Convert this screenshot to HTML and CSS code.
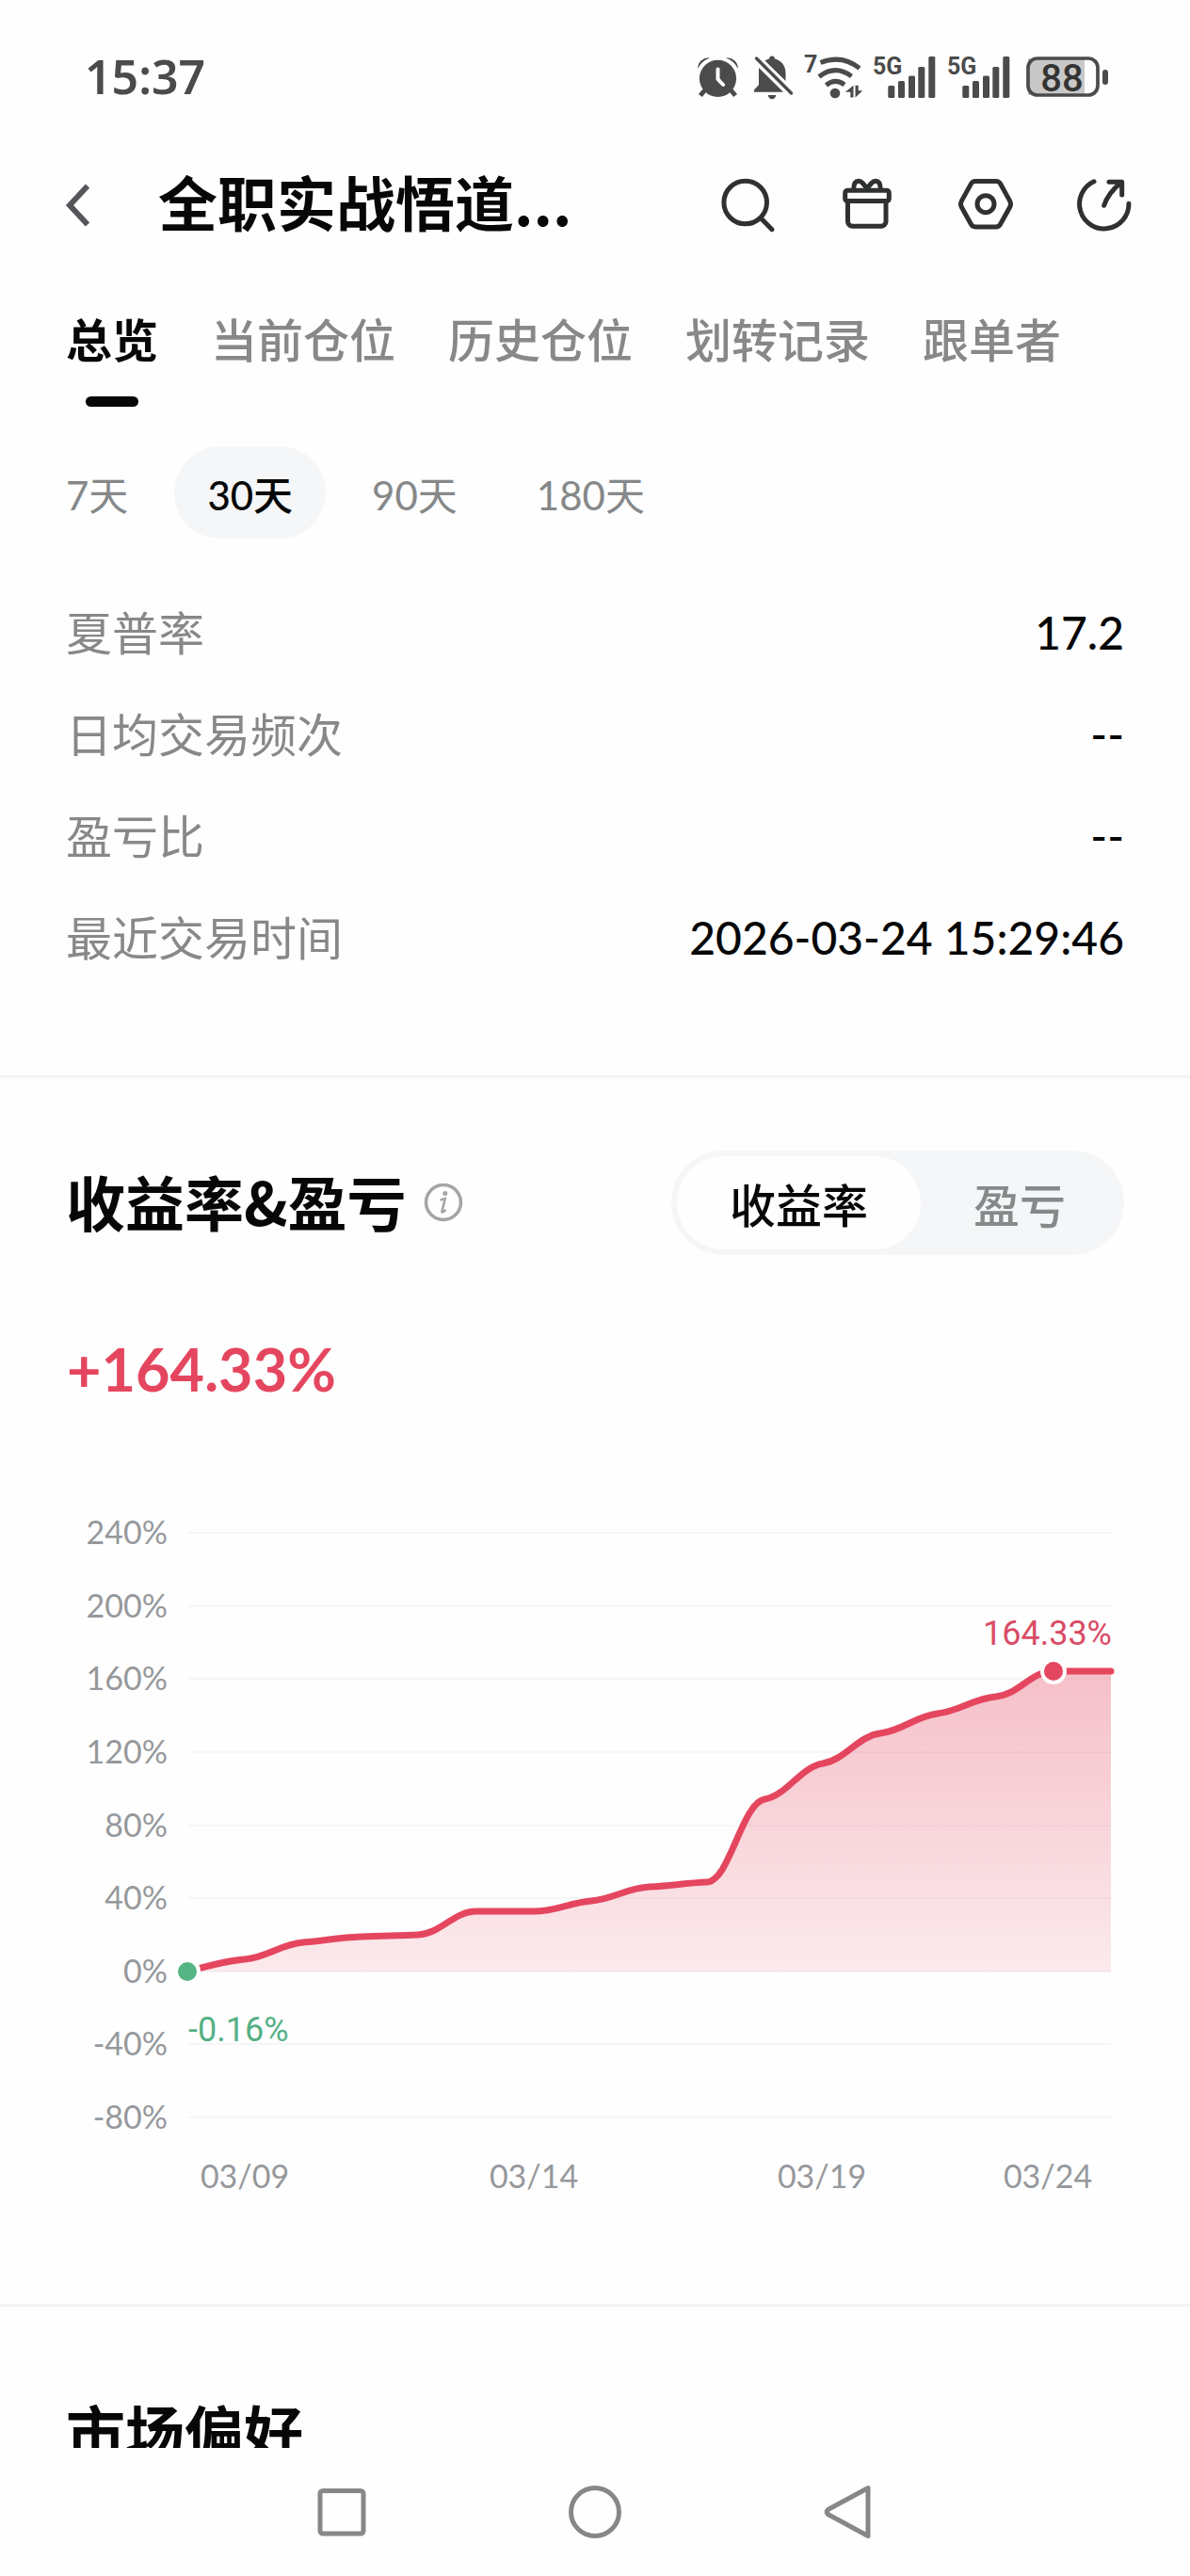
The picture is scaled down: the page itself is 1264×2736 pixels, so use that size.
FILE: index.html
```html
<!DOCTYPE html>
<html lang="zh-CN">
<head>
<meta charset="utf-8">
<meta name="viewport" content="width=device-width, initial-scale=1">
<title>全职实战悟道</title>
<link rel="stylesheet" href="styles.css">
</head>
<body>
<div class="app">
  <div class="status">
    <time class="clock">15:37</time>
    <svg class="status-icons" viewBox="20 15 440 50" aria-hidden="true">
      <g fill="#4b4b4b">
        <circle cx="42.5" cy="42.3" r="19.6"/>
        <path d="M21.2 32a11.4 11.4 0 0 1 12.6-11.6q-9 3.400-12.600 11.600zM63.800 32a11.400 11.400 0 0 0-12.600-11.600q9 3.400 12.600 11.600z"/>
        <path d="M28.500 55l-4.600 5.500M56.500 55l4.600 5.500" stroke="#4b4b4b" stroke-width="5" fill="none"/>
        <path d="M42.500 32.500v10.500l5.600 6" stroke="#fefefe" stroke-width="4" stroke-linecap="round" fill="none"/>
        <path d="M86 31l26 25.800H81v-2.300l5-5.500zM92.500 23.500q2.300-1.500 4.700-2.200a2.800 2.800 0 0 1 5.600 0c7.400 1.900 11.700 8 11.700 15.200V45z"/>
        <path d="M83.500 21l37 37" stroke="#4b4b4b" stroke-width="3.400" stroke-linecap="round"/>
        <path d="M95.800 60h8.400a4.200 4.200 0 0 1-8.400 0z"/>
        <circle cx="167" cy="58" r="5.300"/>
        <path d="M186.500 49.800v12.800h-3.200v-5.800h-5.500zM188.500 62.600V49.800h3.200v5.400h4.600z"/>
        <g fill="none" stroke="#4b4b4b" stroke-width="5">
          <path d="M151.500 25.500Q174 16.500 193 31.500"/>
          <path d="M150 40.500Q167 27 184.500 40"/>
          <path d="M157.500 49.500Q167 41.500 177 49"/>
        </g>
        <g id="bars">
          <rect x="223.300" y="50" width="7" height="13" rx="1.500"/>
          <rect x="234" y="45" width="7" height="18" rx="1.500"/>
          <rect x="245" y="39.500" width="7" height="23.500" rx="1.500"/>
          <rect x="255.300" y="30" width="7" height="33" rx="1.500"/>
          <rect x="266.300" y="19" width="7" height="44" rx="1.500"/>
        </g>
        <use href="#bars" x="79"/>
        <rect x="451" y="33" width="6" height="16" rx="3"/>
      </g>
      <rect x="372" y="21" width="60" height="39" fill="#c8c8c8"/>
      <rect x="372" y="21" width="74" height="39" rx="10" fill="none" stroke="#4b4b4b" stroke-width="3.700"/>
      <text class="net" x="134" y="36">7</text>
      <text class="net" x="207" y="38">5G</text>
      <text class="net" x="286" y="38">5G</text>
      <text class="battery" x="408" y="56" text-anchor="middle">88</text>
    </svg>
  </div>

  <header class="header">
    <button class="icon-btn back" aria-label="返回"><svg viewBox="0 0 32 64"><path d="M25 12.500L6 33l19 20.500" stroke="#55565a" stroke-width="6" fill="none"/></svg></button>
    <h1 class="title">全职实战悟道...</h1>
    <div class="actions">
      <button class="icon-btn" aria-label="搜索"><svg viewBox="0 0 64 64"><circle cx="29.700" cy="30" r="22.800"/><path d="M46.700 47.300L58 58.700"/></svg></button>
      <button class="icon-btn" aria-label="礼物"><svg viewBox="0 0 64 64"><rect x="9.700" y="17.300" width="46.600" height="11.300" rx="2.500"/><path d="M12.500 29v21.300a5 5 0 0 0 5 5h30.500a5 5 0 0 0 5-5V29"/><path d="M18.700 16.500c0-5.500 1.500-9.300 5.300-9.300 3.300 0 5.600 3.400 9 8.300 3.400-4.900 5.700-8.300 9-8.300 3.800 0 5.300 3.800 5.300 9.300"/></svg></button>
      <button class="icon-btn" aria-label="设置"><svg viewBox="0 0 64 64"><path d="M22 7.500h22q3 0 4.500 2.600l10 18q2 3.600 0 7.200l-10 18q-1.500 2.600-4.500 2.600H22q-3 0-4.500-2.600l-10-18q-2-3.600 0-7.200l10-18Q19 7.500 22 7.500z"/><circle cx="33" cy="31.700" r="9"/></svg></button>
      <button class="icon-btn" aria-label="分享"><svg viewBox="0 0 64 64"><path d="M22 7.800A26.200 26.200 0 1 0 59 31.300"/><path d="M32.700 33.300Q37 20 51 8.800M38 8.200h13.700v13.800"/></svg></button>
    </div>
  </header>

  <nav class="tabs">
    <a class="tab active" href="#overview">总览</a>
    <a class="tab" href="#current">当前仓位</a>
    <a class="tab" href="#history">历史仓位</a>
    <a class="tab" href="#transfer">划转记录</a>
    <a class="tab" href="#followers">跟单者</a>
  </nav>

  <main class="content" id="overview">
    <section class="stats">
      <div class="periods">
        <button class="period">7天</button>
        <button class="period active">30天</button>
        <button class="period">90天</button>
        <button class="period">180天</button>
      </div>
      <dl class="list">
        <div class="row"><dt>夏普率</dt><dd>17.2</dd></div>
        <div class="row"><dt>日均交易频次</dt><dd>--</dd></div>
        <div class="row"><dt>盈亏比</dt><dd>--</dd></div>
        <div class="row"><dt>最近交易时间</dt><dd>2026-03-24 15:29:46</dd></div>
      </dl>
    </section>

    <section class="returns">
      <div class="returns-head">
        <h2 class="heading">收益率&amp;盈亏</h2>
        <button class="icon-btn info" aria-label="说明"><svg viewBox="0 0 42 42"><circle cx="21" cy="20" r="18.500" fill="none" stroke="#a3a5a6" stroke-width="3.500"/><circle cx="22.800" cy="10.600" r="2.500" fill="#a3a5a6"/><path d="M17.500 17.500l5.300-1.200-3.300 13.200q-.6 2.300 4-1.500" fill="none" stroke="#a3a5a6" stroke-width="2.600"/></svg></button>
        <div class="switch">
          <button class="option active">收益率</button>
          <button class="option">盈亏</button>
        </div>
      </div>
      <p class="total">+164.33%</p>
      <svg class="chart" viewBox="0 0 1264 760" role="img" aria-label="收益率走势">
        <defs>
          <linearGradient id="fade" x1="0" y1="0" x2="0" y2="1">
            <stop offset="0" stop-color="#e5465f" stop-opacity=".34"/>
            <stop offset="1" stop-color="#e5465f" stop-opacity=".11"/>
          </linearGradient>
        </defs>
        <path class="grid" d="M200 28h981M200 106h981M200 183h981M200 261h981M200 339h981M200 416h981M200 494h981M200 571h981M200 649h981"/>
        <g class="axis" text-anchor="end">
          <text x="178" y="40">240%</text>
          <text x="178" y="118">200%</text>
          <text x="178" y="195">160%</text>
          <text x="178" y="273">120%</text>
          <text x="178" y="351">80%</text>
          <text x="178" y="428">40%</text>
          <text x="178" y="506">0%</text>
          <text x="178" y="583">-40%</text>
          <text x="178" y="661">-80%</text>
        </g>
        <g class="axis" text-anchor="middle">
          <text x="260" y="724">03/09</text>
          <text x="567" y="724">03/14</text>
          <text x="873" y="724">03/19</text>
          <text x="1113" y="724">03/24</text>
        </g>
        <path fill="url(#fade)" d="M199 494C223 488 236 483 260 481S298 465 322 463S359 458 383 457S420 456 444 455S482 430 506 430S543 430 567 430S604 421 628 419S666 405 690 404S727 400 751 399S788 315 812 311S850 277 874 273S911 244 935 241S972 223 996 220S1034 204 1058 202S1095 175 1119 175L1180 175V494z"/>
        <path class="line" d="M199 494C223 488 236 483 260 481S298 465 322 463S359 458 383 457S420 456 444 455S482 430 506 430S543 430 567 430S604 421 628 419S666 405 690 404S727 400 751 399S788 315 812 311S850 277 874 273S911 244 935 241S972 223 996 220S1034 204 1058 202S1095 175 1119 175L1180 175"/>
        <circle class="dot" cx="199" cy="494" r="12" fill="#55b585"/>
        <circle class="dot" cx="1119" cy="175" r="12" fill="#e5465f"/>
        <text class="callout high" x="1181" y="147" text-anchor="end">164.33%</text>
        <text class="callout low" x="200" y="568">-0.16%</text>
      </svg>
    </section>

    <section class="market">
      <h2 class="heading">市场偏好</h2>
    </section>
  </main>

  <div class="navbar">
    <button class="icon-btn" aria-label="最近任务"><svg viewBox="0 0 64 64"><rect x="9" y="9.500" width="46" height="45.500" rx="3"/></svg></button>
    <button class="icon-btn" aria-label="主页"><svg viewBox="0 0 64 64"><circle cx="32" cy="32" r="25.500"/></svg></button>
    <button class="icon-btn" aria-label="返回上一页"><svg viewBox="0 0 64 64"><path d="M53 6.500v51L10.500 34.500q-2.500-2.500 0-5z"/></svg></button>
  </div>
</div>
</body>
</html>
```
FILE: styles.css
```css
* { box-sizing: border-box; }

body {
  margin: 0;
  background: #fefefe;
  color: #060707;
  font-family: Lato, "Noto Sans CJK SC", sans-serif;
}

h1, h2, p, dl, dd { margin: 0; }

button {
  padding: 0;
  border: 0;
  background: none;
  color: inherit;
  font: inherit;
}

svg { display: block; }

.app {
  display: flex;
  flex-direction: column;
  height: 100vh;
}

.status {
  flex: none;
  display: flex;
  justify-content: space-between;
  align-items: center;
  height: 162px;
  padding: 0 84px 0 90px;
}

.clock {
  color: #4b4b4b;
  font: 600 50px/64px "Noto Sans", sans-serif;
}

.status-icons {
  width: 440px;
  height: 50px;
}

.net {
  fill: #4b4b4b;
  font: 700 25px Roboto, sans-serif;
}

.battery {
  fill: #333;
  font: 500 40px Roboto, sans-serif;
}

.header {
  flex: none;
  display: flex;
  align-items: center;
  height: 110px;
  padding: 0 60px 0 68px;
}

.icon-btn svg {
  width: 64px;
  height: 64px;
}

.back svg { width: 32px; }

.title {
  margin-left: 68px;
  padding-bottom: 8px;
  font: 700 63px/80px "Noto Sans CJK SC", sans-serif;
}

.actions {
  display: flex;
  gap: 62px;
  margin-left: auto;
}

.actions svg {
  fill: none;
  stroke: #2e3031;
  stroke-width: 5;
  stroke-linecap: round;
  stroke-linejoin: round;
}

.tabs {
  flex: none;
  display: flex;
  gap: 56px;
  padding: 57px 70px 0;
}

.tab {
  color: #868889;
  font-size: 49px;
  font-weight: 500;
  line-height: 64px;
  text-decoration: none;
}

.tab::after {
  content: "";
  display: block;
  width: 56px;
  height: 11px;
  margin: 28px auto 0;
  border-radius: 6px;
}

.tab.active {
  color: #060707;
  font-weight: 700;
}

.tab.active::after { background: #060707; }

.content {
  flex: 1;
  min-height: 0;
  overflow: hidden;
}

.stats {
  padding: 42px 0 114px;
  border-bottom: 3px solid #f3f4f4;
}

.periods {
  display: flex;
  gap: 14px;
  padding: 0 35px;
}

.period {
  height: 98px;
  padding: 0 35px;
  border-radius: 49px;
  color: #868889;
  font-size: 42px;
}

.period.active {
  background: #f4f6f8;
  color: #060707;
  font-weight: 500;
}

.list {
  display: flex;
  flex-direction: column;
  gap: 44px;
  margin-top: 68px;
  padding: 0 70px;
}

.row {
  display: flex;
  justify-content: space-between;
  font-size: 49px;
  line-height: 64px;
}

.row dt { color: #868889; }

.row dd {
  font-size: 48px;
  font-weight: 500;
}

.returns {
  padding: 77px 0 87px;
  border-bottom: 3px solid #f3f4f4;
}

.returns-head {
  display: flex;
  align-items: center;
  padding: 0 70px;
}

.heading {
  padding-bottom: 6px;
  font: 700 63px/64px "Noto Sans CJK SC", sans-serif;
}

.info { margin-left: 18px; }

.info svg {
  width: 42px;
  height: 42px;
}

.switch {
  display: flex;
  margin-left: auto;
  padding: 6px;
  border-radius: 56px;
  background: #f4f6f8;
}

.option {
  height: 99px;
  padding: 0 56px;
  border-radius: 50px;
  color: #868889;
  font-size: 49px;
  font-weight: 500;
}

.option.active {
  background: #fefefe;
  color: #060707;
}

.total {
  margin-top: 89px;
  padding: 0 71px;
  color: #e5465f;
  font-size: 63px;
  font-weight: 700;
  line-height: 64px;
}

.chart {
  width: 100%;
  margin-top: 114px;
}

.grid {
  stroke: #f5f6f7;
  stroke-width: 2;
}

.axis {
  fill: #96989b;
  font-size: 34px;
}

.line {
  fill: none;
  stroke: #e5465f;
  stroke-width: 7;
  stroke-linecap: round;
  stroke-linejoin: round;
}

.dot {
  stroke: #fefefe;
  stroke-width: 4;
}

.callout { font: 400 36px Roboto, sans-serif; }
.callout.low { fill: #55b085; }
.callout.high { fill: #d94c66; }

.market { padding: 99px 70px 0; }

.navbar {
  flex: none;
  display: flex;
  justify-content: center;
  align-items: center;
  gap: 205px;
  height: 136px;
}

.navbar svg {
  fill: none;
  stroke: #878787;
  stroke-width: 5;
  stroke-linejoin: round;
}
```
